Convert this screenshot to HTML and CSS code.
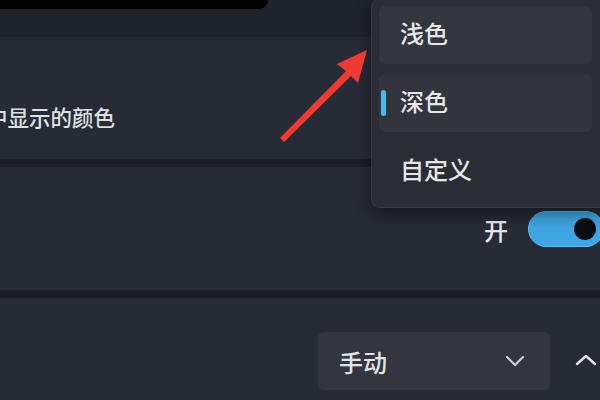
FILE: index.html
```html
<!DOCTYPE html>
<html lang="zh-CN">
<head>
<meta charset="utf-8">
<link rel="stylesheet" href="styles.css">
</head>
<body>
<div class="page">
  <div class="topbar"><div class="topbar-black"></div></div>
  <section class="card card-mode">
    <p class="desc">中显示的颜色</p>
  </section>
  <section class="card card-toggle">
    <span class="toggle-label">开</span>
    <span class="toggle"><span class="knob"></span></span>
  </section>
  <section class="card card-select">
    <div class="select">
      <span class="select-text">手动</span>
      <svg class="chev" width="20" height="12" viewBox="0 0 20 12"><path d="M2 2 L10 10 L18 2" fill="none" stroke="#cfd1d6" stroke-width="2.2" stroke-linecap="round" stroke-linejoin="round"/></svg>
    </div>
    <svg class="chev-up" width="22" height="12" viewBox="0 0 22 12"><path d="M2 10 L11 2 L20 10" fill="none" stroke="#e4e5e8" stroke-width="2.4" stroke-linecap="round" stroke-linejoin="round"/></svg>
  </section>

  <div class="menu">
    <div class="item hover">浅色</div>
    <div class="item selected"><span class="indicator"></span>深色</div>
    <div class="item">自定义</div>
  </div>

  <svg class="arrow" width="600" height="400" viewBox="0 0 600 400">
    <polygon points="367,50 358,83 351,76 284,142 280,138 346,71 337,64" fill="#ee3a33"/>
  </svg>
</div>
</body>
</html>
```

FILE: styles.css
```css
* { box-sizing: border-box; }
html, body { margin: 0; padding: 0; }
body {
  background: #1b1e26;
  font-family: "Noto Sans CJK SC", "Noto Sans", sans-serif;
  color: #e4e5e8;
}
.page {
  position: relative;
  width: 600px;
  height: 400px;
  overflow: hidden;
  display: flex;
  flex-direction: column;
  background: #1b1e26;
}
.topbar {
  height: 37px;
  background: #1f232c;
  flex: none;
}
.topbar-black {
  width: 268px;
  height: 9px;
  background: #020203;
  border-bottom-right-radius: 12px;
}
.card {
  background: #272b36;
  flex: none;
  display: flex;
  align-items: center;
}
.card-mode {
  height: 122px;
  align-items: flex-start;
}
.desc {
  margin: 65px 0 0 -14px;
  font-size: 21.5px;
  line-height: 30px;
  font-weight: 500;
  color: #dfe0e4;
}
.card-toggle {
  margin-top: 8px;
  height: 123px;
  justify-content: flex-end;
}
.toggle-label {
  font-size: 24px;
  line-height: 30px;
  font-weight: 500;
  margin-right: 20px;
  margin-top: 3px;
  color: #e6e7ea;
}
.toggle {
  width: 76px;
  height: 36px;
  border-radius: 18px;
  background: #3fa6e4;
  border: 1.5px solid #5cc0f4;
  margin-right: -4px;
  display: flex;
  align-items: center;
  justify-content: flex-end;
  padding-right: 7px;
}
.knob {
  width: 22px;
  height: 22px;
  border-radius: 50%;
  background: #0c0d10;
}
.card-select {
  margin-top: 8px;
  flex: 1;
  align-items: flex-start;
  justify-content: flex-end;
  padding-top: 34px;
  padding-right: 3px;
}
.select {
  width: 232px;
  height: 58px;
  background: #33363e;
  border-radius: 6px;
  display: flex;
  align-items: center;
  justify-content: space-between;
  padding: 0 25px 0 21px;
}
.select-text {
  font-size: 24px;
  font-weight: 500;
  color: #e3e4e7;
}
.chev-up {
  margin-left: 25px;
  margin-top: 22px;
}
.menu {
  position: absolute;
  left: 371px;
  top: -2px;
  width: 240px;
  height: 210px;
  background: #2b2d34;
  border: 1px solid #383a41;
  border-radius: 9px;
  box-shadow: 0 6px 16px rgba(0,0,0,0.45);
  padding: 7px 18px 0 7px;
  display: flex;
  flex-direction: column;
  gap: 10px;
}
.item {
  position: relative;
  height: 58px;
  border-radius: 6px;
  display: flex;
  align-items: center;
  padding: 0 0 5px 21px;
  font-size: 24px;
  font-weight: 500;
  color: #e6e7ea;
}
.item.hover { background: #33363d; }
.item.selected { background: #32353c; }
.indicator {
  position: absolute;
  left: 2px;
  top: 16px;
  width: 5px;
  height: 26px;
  border-radius: 3px;
  background: #4cb8f0;
}
.arrow {
  position: absolute;
  left: 0;
  top: 0;
  pointer-events: none;
}
```
